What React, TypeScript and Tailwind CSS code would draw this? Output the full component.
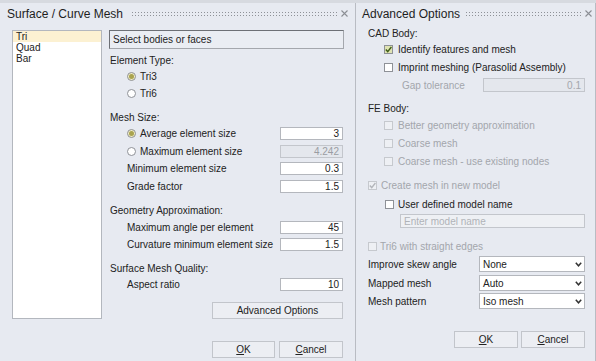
import React from "react";

const Dots = ({ className }: { className: string }) => (
  <div
    className={`h-[6px] bg-[radial-gradient(circle,#8f9298_0.7px,transparent_1px)] bg-[length:3px_3px] ${className}`}
  />
);

const CloseX = () => (
  <svg width="7" height="7" viewBox="0 0 7 7" className="shrink-0">
    <path d="M0.5 0.5 L6.5 6.5 M6.5 0.5 L0.5 6.5" stroke="#8b8e94" strokeWidth="1.1" />
  </svg>
);

const Radio = ({ checked }: { checked?: boolean }) => (
  <div
    className={`w-[9px] h-[9px] rounded-full border border-[#8e9197] flex items-center justify-center shrink-0 ${
      checked ? "bg-[#f1edc4]" : "bg-white"
    }`}
  >
    {checked && <div className="w-[5px] h-[5px] rounded-full bg-[#a9a34f]" />}
  </div>
);

const Check = ({ checked, disabled }: { checked?: boolean; disabled?: boolean }) => (
  <div
    className={`w-[9px] h-[9px] border shrink-0 flex items-center justify-center ${
      disabled ? "border-[#c6c9ce] bg-[#eef0f4]" : checked ? "border-[#8e9197] bg-[#dfe3b3]" : "border-[#8e9197] bg-white"
    }`}
  >
    {checked && (
      <svg width="7" height="7" viewBox="0 0 7 7">
        <path
          d="M0.8 3.6 L2.7 5.6 L6.4 1"
          fill="none"
          stroke={disabled ? "#b3b6bb" : "#3f5e17"}
          strokeWidth="1.4"
        />
      </svg>
    )}
  </div>
);

const NumInput = ({ value, disabled }: { value: string; disabled?: boolean }) => (
  <div
    className={`w-[63px] h-[13px] mr-[1px] border flex items-center justify-end pr-[3px] text-[10px] ${
      disabled ? "border-[#c3c6cc] bg-[#e4e7ed] text-[#9a9da3]" : "border-[#b4b7bd] bg-white text-[#222]"
    }`}
  >
    {value}
  </div>
);

const Btn = ({ children, w }: { children: React.ReactNode; w: string }) => (
  <div
    className={`${w} h-[17px] border border-[#c2c5cb] bg-[#eceef3] flex items-center justify-center text-[10px] text-[#222]`}
  >
    {children}
  </div>
);

const Select = ({ value }: { value: string }) => (
  <div className="w-[106px] h-[16px] border border-[#b4b7bd] bg-white flex items-center">
    <span className="flex-1 pl-[3px]">{value}</span>
    <svg width="7" height="5" viewBox="0 0 7 5" className="mr-[2px]">
      <path d="M0.8 0.8 L3.5 3.8 L6.2 0.8" fill="none" stroke="#333" strokeWidth="1.5" />
    </svg>
  </div>
);

export default function App() {
  return (
    <div className="w-[596px] h-[361px] overflow-hidden bg-[#e7eaf1] font-['Liberation_Sans',Arial,sans-serif] text-[10px] text-[#222] flex flex-col">
      <div className="h-[3px] bg-[#d7dae0] shrink-0" />
      <div className="flex flex-1 min-h-0">
        {/* Left panel */}
        <div className="w-[356px] border-r border-[#b9bcc3] flex flex-col">
          <div className="h-[21px] flex items-center pl-[7px] pr-[7px]">
            <span className="text-[12px] text-[#1e1e1e] whitespace-nowrap">Surface / Curve Mesh</span>
            <Dots className="flex-1 ml-[8px] mr-[4px]" />
            <CloseX />
          </div>
          <div className="flex mt-[6px]">
            <div className="ml-[12px] w-[90px] h-[289px] bg-white border border-[#b3b7be] flex flex-col">
              <div className="h-[11px] bg-[#fcf1d2] pl-[3px] leading-[11px]">Tri</div>
              <div className="h-[11px] pl-[3px] leading-[11px]">Quad</div>
              <div className="h-[11px] pl-[3px] leading-[11px]">Bar</div>
            </div>
            <div className="ml-[7px] w-[235px] flex flex-col">
              <div className="h-[19px] border border-[#a4a7ad] border-t-[#6d7076] border-l-[#6d7076] bg-[#eaedf3] flex items-center pl-[3px]">
                Select bodies or faces
              </div>
              <div className="h-[16px] mt-[3px] flex items-center pl-[1px]">Element Type:</div>
              <div className="h-[16px] flex items-center pl-[18px] gap-[4px]">
                <Radio checked /> <span>Tri3</span>
              </div>
              <div className="h-[16px] mt-[1px] flex items-center pl-[18px] gap-[4px]">
                <Radio /> <span>Tri6</span>
              </div>
              <div className="h-[16px] mt-[8px] flex items-center pl-[1px]">Mesh Size:</div>
              <div className="h-[16px] flex items-center pl-[18px] gap-[4px]">
                <Radio checked /> <span className="flex-1">Average element size</span>
                <NumInput value="3" />
              </div>
              <div className="h-[16px] mt-[2px] flex items-center pl-[18px] gap-[4px]">
                <Radio /> <span className="flex-1">Maximum element size</span>
                <NumInput value="4.242" disabled />
              </div>
              <div className="h-[16px] mt-[1px] flex items-center pl-[18px]">
                <span className="flex-1">Minimum element size</span>
                <NumInput value="0.3" />
              </div>
              <div className="h-[16px] mt-[2px] flex items-center pl-[18px]">
                <span className="flex-1">Grade factor</span>
                <NumInput value="1.5" />
              </div>
              <div className="h-[16px] mt-[8px] flex items-center pl-[1px]">Geometry Approximation:</div>
              <div className="h-[16px] mt-[1px] flex items-center pl-[18px]">
                <span className="flex-1">Maximum angle per element</span>
                <NumInput value="45" />
              </div>
              <div className="h-[16px] mt-[1px] flex items-center pl-[18px]">
                <span className="flex-1">Curvature minimum element size</span>
                <NumInput value="1.5" />
              </div>
              <div className="h-[16px] mt-[8px] flex items-center pl-[1px]">Surface Mesh Quality:</div>
              <div className="h-[16px] flex items-center pl-[18px]">
                <span className="flex-1">Aspect ratio</span>
                <NumInput value="10" />
              </div>
              <div className="mt-[10px] flex justify-end pr-[1px]">
                <Btn w="w-[131px]">Advanced Options</Btn>
              </div>
              <div className="mt-[22px] flex justify-end gap-[4px] pr-[1px]">
                <Btn w="w-[63px]">
                  <span><span className="underline">O</span>K</span>
                </Btn>
                <Btn w="w-[64px]">
                  <span><span className="underline">C</span>ancel</span>
                </Btn>
              </div>
            </div>
          </div>
        </div>

        {/* Right panel */}
        <div className="w-[240px] border-r border-[#b9bcc3] flex flex-col">
          <div className="h-[21px] flex items-center pl-[6px] pr-[3px]">
            <span className="text-[12px] text-[#1e1e1e] whitespace-nowrap">Advanced Options</span>
            <Dots className="flex-1 ml-[5px] mr-[3px]" />
            <CloseX />
          </div>
          <div className="flex flex-col pl-[12px] pr-[10px]">
            <div className="h-[16px] mt-[1px] flex items-center">CAD Body:</div>
            <div className="h-[16px] flex items-center pl-[16px] gap-[5px]">
              <Check checked /> <span>Identify features and mesh</span>
            </div>
            <div className="h-[16px] mt-[2px] flex items-center pl-[16px] gap-[5px]">
              <Check /> <span>Imprint meshing (Parasolid Assembly)</span>
            </div>
            <div className="h-[16px] mt-[2px] flex items-center pl-[34px] text-[#a3a6ac]">
              <span className="flex-1">Gap tolerance</span>
              <div className="w-[102px] h-[14px] border border-[#c3c6cc] bg-[#e4e7ed] flex items-center justify-end pr-[3px]">
                0.1
              </div>
            </div>
            <div className="h-[16px] mt-[7px] flex items-center">FE Body:</div>
            <div className="h-[16px] mt-[1px] flex items-center pl-[16px] gap-[5px] text-[#a3a6ac]">
              <Check disabled /> <span>Better geometry approximation</span>
            </div>
            <div className="h-[16px] mt-[2px] flex items-center pl-[16px] gap-[5px] text-[#a3a6ac]">
              <Check disabled /> <span>Coarse mesh</span>
            </div>
            <div className="h-[16px] mt-[2px] flex items-center pl-[16px] gap-[5px] text-[#a3a6ac]">
              <Check disabled /> <span>Coarse mesh - use existing nodes</span>
            </div>
            <div className="h-[16px] mt-[8px] flex items-center gap-[4px] text-[#a3a6ac]">
              <Check checked disabled /> <span>Create mesh in new model</span>
            </div>
            <div className="h-[16px] mt-[3px] flex items-center pl-[17px] gap-[4px]">
              <Check /> <span>User defined model name</span>
            </div>
            <div className="mt-[2px] flex pl-[32px]">
              <div className="flex-1 h-[14px] border border-[#c3c6cc] bg-[#eef0f4] flex items-center pl-[3px] text-[#b0b3b8]">
                Enter model name
              </div>
            </div>
            <div className="h-[16px] mt-[10px] flex items-center gap-[3px] text-[#a3a6ac]">
              <Check disabled /> <span>Tri6 with straight edges</span>
            </div>
            <div className="h-[16px] mt-[2px] flex items-center">
              <span className="flex-1">Improve skew angle</span>
              <Select value="None" />
            </div>
            <div className="h-[16px] mt-[3px] flex items-center">
              <span className="flex-1">Mapped mesh</span>
              <Select value="Auto" />
            </div>
            <div className="h-[16px] mt-[2px] flex items-center">
              <span className="flex-1">Mesh pattern</span>
              <Select value="Iso mesh" />
            </div>
            <div className="mt-[22px] flex justify-end gap-[3px]">
              <Btn w="w-[64px]">
                <span><span className="underline">O</span>K</span>
              </Btn>
              <Btn w="w-[64px]">
                <span><span className="underline">C</span>ancel</span>
              </Btn>
            </div>
          </div>
        </div>
      </div>
    </div>
  );
}
